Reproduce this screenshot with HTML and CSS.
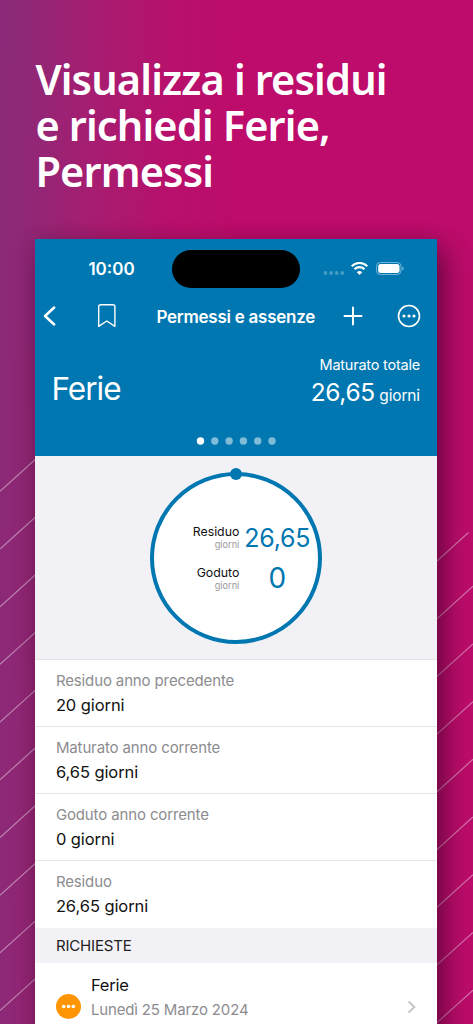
FILE: index.html
```html
<!DOCTYPE html>
<html lang="it">
<head>
<meta charset="utf-8">
<title>Permessi e assenze</title>
<link rel="stylesheet" href="styles.css">
</head>
<body>
<main class="poster">
  <svg class="stripes" width="473" height="1024" viewBox="0 0 473 1024" aria-hidden="true">
    <path d="M0 491.300l36-32.500M0 549l36-32.500M0 606.700l36-32.500M0 664.400l36-32.500M0 722.100l36-32.500M0 779.800l36-32.500M0 837.500l36-32.500M0 895.200l36-32.500M0 952.900l36-32.500M0 1010.600l36-32.500M437 561l31.500-28.500M437 618.700l36-32.500M437 676.400l36-32.500M437 734.100l36-32.500M437 791.800l36-32.500M437 849.500l36-32.500M437 907.200l36-32.500M437 964.900l36-32.500M437 1022.600l36-32.500"/>
  </svg>
  <h1 class="headline">Visualizza i residui<br>e richiedi Ferie,<br>Permessi</h1>

  <section class="phone">
    <header class="top">
      <div class="status">
        <span class="time">10:00</span>
        <span class="island"></span>
        <svg class="signals" width="82" height="16" viewBox="0 0 82 16">
          <g fill="#fff" opacity=".27"><circle cx="2.500" cy="11" r="1.900"/><circle cx="8.100" cy="11" r="1.900"/><circle cx="13.700" cy="11" r="1.900"/><circle cx="19.300" cy="11" r="1.900"/></g>
          <g fill="none" stroke="#fff" stroke-width="2.200"><path d="M28.700 4.200a11 11 0 0 1 15.600 0"/><path d="M31.500 7.300a7 7 0 0 1 10 0"/></g>
          <path d="M36.500 13L33.800 10.200a3.900 3.900 0 0 1 5.400 0z" fill="#fff"/>
          <rect x="53.500" y=".5" width="24.500" height="12" rx="3.800" fill="none" stroke="#fff" opacity=".45"/>
          <rect x="55.200" y="2" width="21.300" height="9" rx="2.500" fill="#fff"/>
          <path d="M79.300 4.500c1.900.7 1.900 3.300 0 4z" fill="#fff" opacity=".5"/>
        </svg>
      </div>
      <nav class="nav">
        <svg class="back" width="14" height="22" viewBox="0 0 14 22"><path d="M11.200 2.500L2 11l9.200 8.500" fill="none" stroke="#fff" stroke-width="2.500" stroke-linecap="round" stroke-linejoin="round"/></svg>
        <svg class="mark" width="20" height="26" viewBox="0 0 20 26"><path d="M1.700 3.700a2 2 0 0 1 2-2h12.200a2 2 0 0 1 2 2v19.600l-8.100-5.300-8.100 5.300z" fill="none" stroke="#fff" stroke-width="1.400" stroke-linejoin="round"/></svg>
        <span class="title">Permessi e assenze</span>
        <svg class="plus" width="20" height="20" viewBox="0 0 20 20"><path d="M10 1.500v17M1.500 10h17" stroke="#fff" stroke-width="2" stroke-linecap="round"/></svg>
        <svg class="more" width="24" height="24" viewBox="0 0 24 24"><circle cx="12" cy="12" r="10.500" fill="none" stroke="#fff" stroke-width="1.600"/><g fill="#fff"><circle cx="7" cy="12" r="1.600"/><circle cx="12" cy="12" r="1.600"/><circle cx="17" cy="12" r="1.600"/></g></svg>
      </nav>
      <div class="summary">
        <span class="kind">Ferie</span>
        <div class="total">
          <span class="total-label">Maturato totale</span>
          <span class="total-value"><b>26,65</b> <i>giorni</i></span>
        </div>
      </div>
      <svg class="dots" width="80" height="10" viewBox="0 0 80 10"><circle cx="4.500" cy="5" r="3.700" fill="#fff"/><g fill="#80bbd7"><circle cx="18.800" cy="5" r="3.700"/><circle cx="33.100" cy="5" r="3.700"/><circle cx="47.400" cy="5" r="3.700"/><circle cx="61.700" cy="5" r="3.700"/><circle cx="76" cy="5" r="3.700"/></g></svg>
    </header>

    <div class="gauge">
      <div class="ring">
        <svg class="ring-dot" width="12" height="12" viewBox="0 0 12 12"><circle cx="6" cy="6" r="6" fill="#0077b0"/></svg>
        <div class="stat"><div class="stat-name"><span>Residuo</span><small>giorni</small></div><span class="num">26,65</span></div>
        <div class="stat"><div class="stat-name"><span>Goduto</span><small>giorni</small></div><span class="num zero">0</span></div>
      </div>
    </div>

    <dl class="rows">
      <div class="row"><dt>Residuo anno precedente</dt><dd>20 giorni</dd></div>
      <div class="row"><dt>Maturato anno corrente</dt><dd>6,65 giorni</dd></div>
      <div class="row"><dt>Goduto anno corrente</dt><dd>0 giorni</dd></div>
      <div class="row"><dt>Residuo</dt><dd>26,65 giorni</dd></div>
    </dl>
    <h2 class="section">RICHIESTE</h2>
    <div class="request">
      <svg class="pending" width="25" height="25" viewBox="0 0 25 25"><circle cx="12.500" cy="12.500" r="12.500" fill="#ff9502"/><g fill="#fff"><circle cx="7.700" cy="12.500" r="1.800"/><circle cx="12.500" cy="12.500" r="1.800"/><circle cx="17.300" cy="12.500" r="1.800"/></g></svg>
      <div class="request-text"><span class="request-kind">Ferie</span><span class="request-date">Lunedì 25 Marzo 2024</span></div>
      <svg class="go" width="9" height="14" viewBox="0 0 9 14"><path d="M1.500 1.500L7.500 7l-6 5.500" fill="none" stroke="#c3c3c6" stroke-width="1.800"/></svg>
    </div>
  </section>
</main>
</body>
</html>
```
FILE: styles.css
```css
* { box-sizing: border-box; margin: 0; padding: 0; }
body { font-family: Inter, "Liberation Sans", sans-serif; }
svg { display: block; flex: none; }
.poster {
  position: relative;
  width: 473px;
  height: 1024px;
  overflow: hidden;
  padding: 57px 36px 0 35.400px;
  background: linear-gradient(91deg, #8a2a78 0, #8e2876 25px, #a51e71 90px, #b8106c 175px, #bd0c6b 240px, #bd0c6b 100%);
}
.stripes { position: absolute; left: 0; top: 0; }
.stripes path { fill: none; stroke: #fff; stroke-opacity: .42; stroke-width: 1.200; }
.headline {
  position: relative;
  height: 181.500px;
  color: #fff;
  font: 600 41.500px/45.800px "Noto Sans", sans-serif;
  letter-spacing: -.85px;
  white-space: nowrap;
}
.phone {
  position: relative;
  width: 401.600px;
  height: 800px;
  background: #fff;
  box-shadow: 8px 12px 26px rgba(20, 0, 20, .48), 0 0 16px rgba(30, 0, 30, .12);
}
.top { height: 217.500px; background: #0077b0; color: #fff; }
.status { display: flex; height: 50px; padding-top: 11.500px; }
.time { width: 136.500px; padding-left: 53px; font-size: 17px; font-weight: 600; line-height: 38px; }
.island { width: 128px; height: 38px; border-radius: 19px; background: #000; }
.signals { margin: 12px 0 0 23px; }
.nav { display: flex; align-items: center; height: 55px; padding-left: 8px; }
.mark { margin-left: 39.500px; }
.title { width: 160px; margin-left: 39.500px; padding-top: 1px; font-size: 17px; font-weight: 600; letter-spacing: -.25px; white-space: nowrap; }
.plus { margin-left: 26.500px; }
.more { margin-left: 34px; }
.summary { display: flex; justify-content: space-between; height: 90px; padding: 11.500px 17px 0 16px; }
.kind { font-size: 31.500px; font-weight: 380; letter-spacing: -.95px; line-height: 68px; }
.total { text-align: right; white-space: nowrap; }
.total span { display: block; }
.total-label { font-size: 14.500px; letter-spacing: -.22px; line-height: 20px; }
.total-value { line-height: 34px; }
.total-value b { font-size: 24.500px; font-weight: 400; letter-spacing: -.35px; }
.total-value i { font-size: 15.500px; font-style: normal; letter-spacing: -.15px; }
.dots { margin: 2.500px 0 0 160.600px; }
.gauge { height: 203.500px; padding: 16px 0 0 114.900px; background: #f2f1f6; border-bottom: 1px solid #e6e6e8; }
.ring {
  position: relative;
  width: 172px;
  height: 172px;
  padding-top: 46px;
  border: 4px solid #0077b0;
  border-radius: 50%;
  background: #fff;
}
.ring-dot { position: absolute; left: 76px; top: -8px; }
.stat { display: flex; height: 41px; }
.stat-name { width: 85px; padding-top: 2px; text-align: right; }
.stat-name span, .stat-name small { display: block; }
.stat-name span { font-size: 12.300px; line-height: 15px; color: #111; }
.stat-name small { font-size: 9.200px; line-height: 11px; color: #98989d; }
.num { width: 76px; text-align: center; font-size: 25px; letter-spacing: -.2px; line-height: 32px; color: #0077b0; }
.zero { font-size: 28px; line-height: 31px; }
.row { height: 67.250px; padding: 11px 0 0 20.500px; border-bottom: 1px solid #e6e6e8; }
.row:last-child { height: 66.700px; border: 0; }
.row dt { font-size: 15px; letter-spacing: -.13px; line-height: 20px; color: #8c8c90; }
.row dd { padding-top: 2px; font-size: 16.500px; letter-spacing: -.08px; line-height: 25px; color: #111; }
.section { height: 35px; padding-left: 20.500px; background: #f2f1f6; color: #222; font-size: 15px; font-weight: 400; letter-spacing: -.15px; line-height: 35px; }
.request { display: flex; padding: 11px 0 0 20.500px; }
.pending { margin-top: 20px; }
.request-text { width: 317px; padding-left: 10px; }
.request-text span { display: block; }
.request-kind { font-size: 16.500px; letter-spacing: -.2px; line-height: 23px; color: #111; }
.request-date { font-size: 15px; letter-spacing: -.15px; line-height: 26px; color: #8c8c90; }
.go { margin-top: 26px; margin-left: 9.500px; }
```
